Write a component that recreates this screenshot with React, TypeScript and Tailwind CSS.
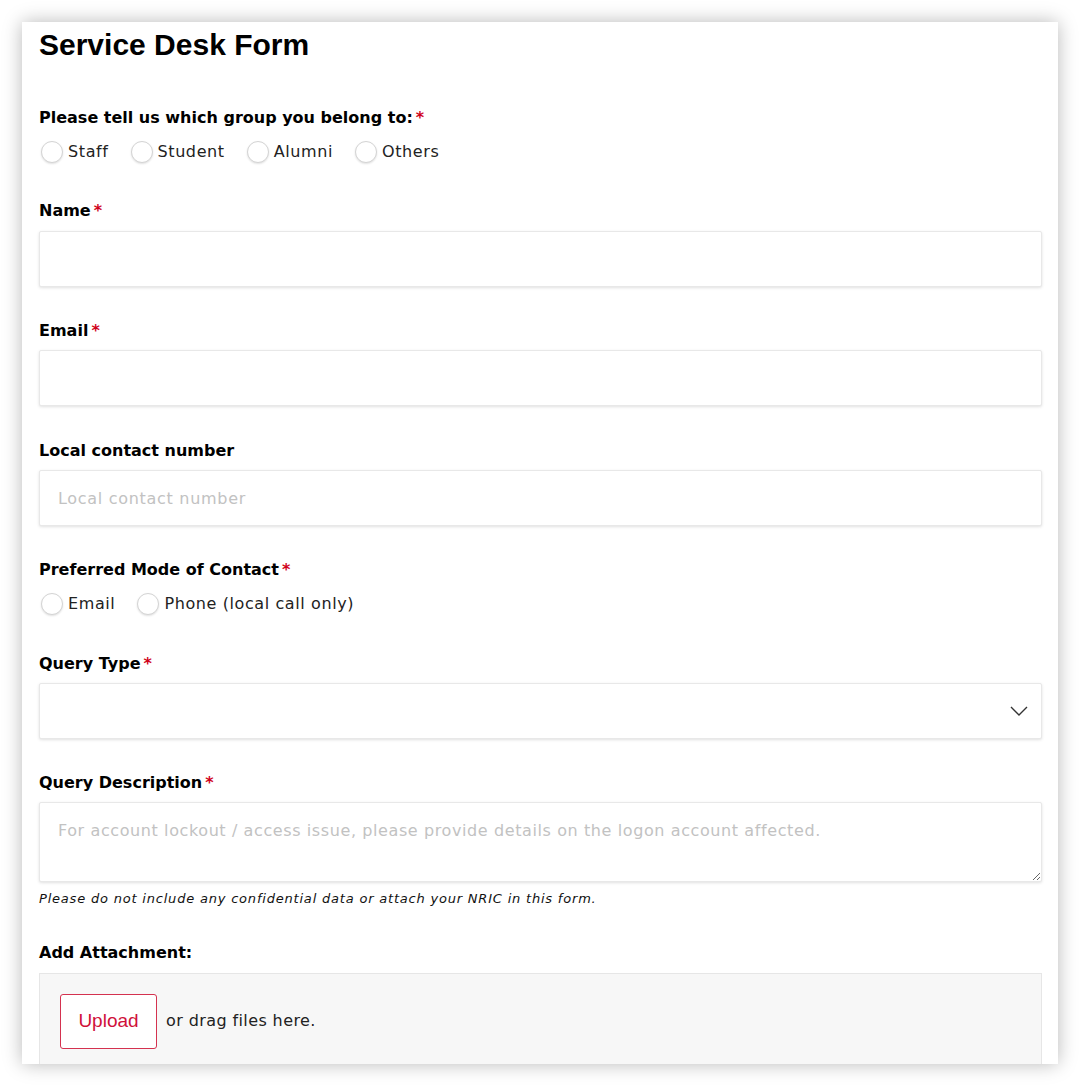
import { useState } from "react"

const font = { fontFamily: '"DejaVu Sans", "Noto Sans", sans-serif' }

function Req() {
  return <span className="ml-[3px] text-[#d0021b]">*</span>
}

function Label({ text, required }: { text: string; required?: boolean }) {
  return (
    <div className="text-[16px] font-bold leading-6 text-black">
      {text}
      {required && <Req />}
    </div>
  )
}

function Radio({ label, checked, onClick }: { label: string; checked: boolean; onClick: () => void }) {
  return (
    <label className="flex cursor-pointer items-center gap-[5px]" onClick={onClick}>
      <span className="flex h-[22px] w-[22px] items-center justify-center rounded-full border border-[#d4d4d4] bg-white shadow-[0_1px_2px_rgba(0,0,0,0.12)]">
        {checked && <span className="h-[10px] w-[10px] rounded-full bg-[#333]" />}
      </span>
      <span className="text-[16px] leading-6 tracking-[0.6px] text-[#222]">{label}</span>
    </label>
  )
}

const inputCls =
  "block h-[56px] w-full rounded-[2px] border border-[#e8e8e8] bg-white px-[18px] text-[16px] tracking-[0.7px] text-[#222] shadow-[0_1px_3px_rgba(0,0,0,0.12)] outline-none placeholder:text-[#c2c2c2]"

export default function App() {
  const [group, setGroup] = useState("")
  const [mode, setMode] = useState("")

  return (
    <div className="min-h-screen bg-white p-[22px]" style={font}>
      <div className="h-[1042px] overflow-hidden bg-white pl-[17px] pr-[16px] shadow-[0_0_18px_rgba(0,0,0,0.28)]">
        <h1
          className="pt-[7px] text-[30px] font-bold leading-8 text-black"
          style={{ fontFamily: '"Liberation Sans", Arial, sans-serif' }}
        >
          Service Desk Form
        </h1>

        <div className="mt-[45px]">
          <Label text="Please tell us which group you belong to:" required />
          <div className="mt-[10px] flex items-center gap-[22px] pl-[2px]">
            {["Staff", "Student", "Alumni", "Others"].map((g) => (
              <Radio key={g} label={g} checked={group === g} onClick={() => setGroup(g)} />
            ))}
          </div>
        </div>

        <div className="mt-[35px]">
          <Label text="Name" required />
          <input className={`${inputCls} mt-[8px]`} />
        </div>

        <div className="mt-[32px]">
          <Label text="Email" required />
          <input className={`${inputCls} mt-[7px]`} />
        </div>

        <div className="mt-[33px]">
          <Label text="Local contact number" />
          <input className={`${inputCls} mt-[7px]`} placeholder="Local contact number" />
        </div>

        <div className="mt-[32px]">
          <Label text="Preferred Mode of Contact" required />
          <div className="mt-[10px] flex items-center gap-[22px] pl-[2px]">
            {["Email", "Phone (local call only)"].map((m) => (
              <Radio key={m} label={m} checked={mode === m} onClick={() => setMode(m)} />
            ))}
          </div>
        </div>

        <div className="mt-[36px]">
          <Label text="Query Type" required />
          <div className="relative mt-[7px]">
            <select className={`${inputCls} appearance-none`} defaultValue="">
              <option value="" />
            </select>
            <svg
              className="pointer-events-none absolute right-[14px] top-1/2 -translate-y-1/2"
              width="18"
              height="10"
              viewBox="0 0 18 10"
              fill="none"
            >
              <path d="M1 1l8 8 8-8" stroke="#333" strokeWidth="1.4" />
            </svg>
          </div>
        </div>

        <div className="mt-[32px]">
          <Label text="Query Description" required />
          <textarea
            className="mt-[7px] block h-[80px] w-full rounded-[2px] border border-[#e8e8e8] bg-white px-[18px] py-[16px] text-[16px] tracking-[0.6px] text-[#222] shadow-[0_1px_3px_rgba(0,0,0,0.12)] outline-none placeholder:text-[#c2c2c2]"
            placeholder="For account lockout / access issue, please provide details on the logon account affected."
          />
          <p className="mt-[7px] text-[13px] italic leading-5 tracking-[0.8px] text-[#111]">
            Please do not include any confidential data or attach your NRIC in this form.
          </p>
        </div>

        <div className="mt-[32px]">
          <Label text="Add Attachment:" />
          <div className="mt-[8px] flex h-[120px] items-start border border-[#e6e6e6] bg-[#f7f7f7] px-[20px] pt-[20px]">
            <button
              className="h-[55px] w-[97px] rounded-[3px] border border-[#d4324f] bg-white text-[19px] text-[#d0103a]"
              style={{ fontFamily: '"Liberation Sans", Arial, sans-serif' }}
            >
              Upload
            </button>
            <span className="ml-[9px] mt-[15px] text-[16px] leading-6 tracking-[0.4px] text-[#222]">
              or drag files here.
            </span>
          </div>
        </div>
      </div>
    </div>
  )
}
